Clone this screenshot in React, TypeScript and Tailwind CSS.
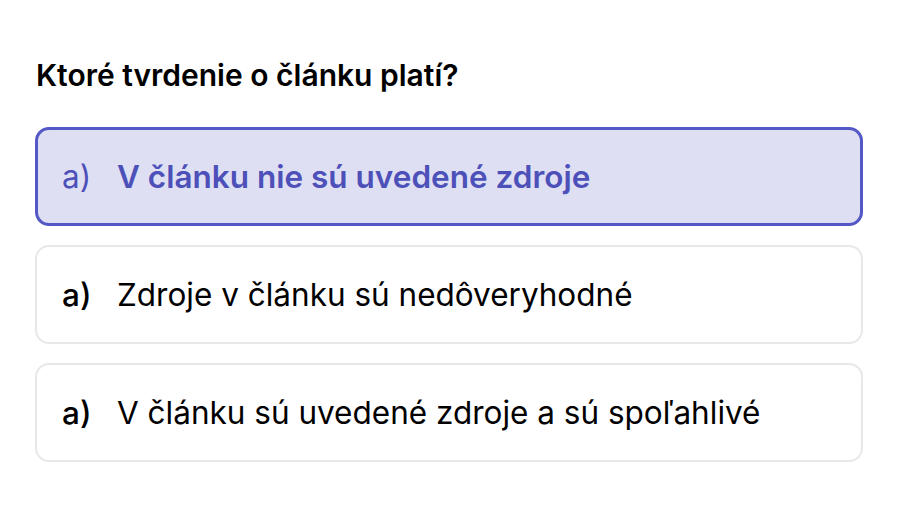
export default function App() {
  const options = [
    { label: "a)", text: "V článku nie sú uvedené zdroje", selected: true },
    { label: "a)", text: "Zdroje v článku sú nedôveryhodné", selected: false },
    { label: "a)", text: "V článku sú uvedené zdroje a sú spoľahlivé", selected: false },
  ];

  return (
    <div
      className="w-[898px] h-[512px] bg-white px-[35px] pt-[56px]"
      style={{ fontFamily: "Inter, 'Noto Sans', sans-serif" }}
    >
      <h1 className="text-[30px] leading-[38px] font-semibold text-black pl-px">
        Ktoré tvrdenie o článku platí?
      </h1>

      <div className="mt-[33px] flex flex-col gap-[19px]">
        {options.map((o, i) =>
          o.selected ? (
            <div
              key={i}
              className="h-[99px] rounded-[14px] border-[3px] border-[#5458c6] bg-[#dfdff4] flex items-center pl-[24px] text-[31.5px] text-[#4c50b8]"
            >
              <span className="w-[55px]">{o.label}</span>
              <span className="font-semibold">{o.text}</span>
            </div>
          ) : (
            <div
              key={i}
              className="h-[99px] rounded-[14px] border-2 border-[#e8e8e8] bg-white flex items-center pl-[25px] text-[31.5px] text-black"
            >
              <span className="w-[55px] font-medium">{o.label}</span>
              <span>{o.text}</span>
            </div>
          )
        )}
      </div>
    </div>
  );
}
